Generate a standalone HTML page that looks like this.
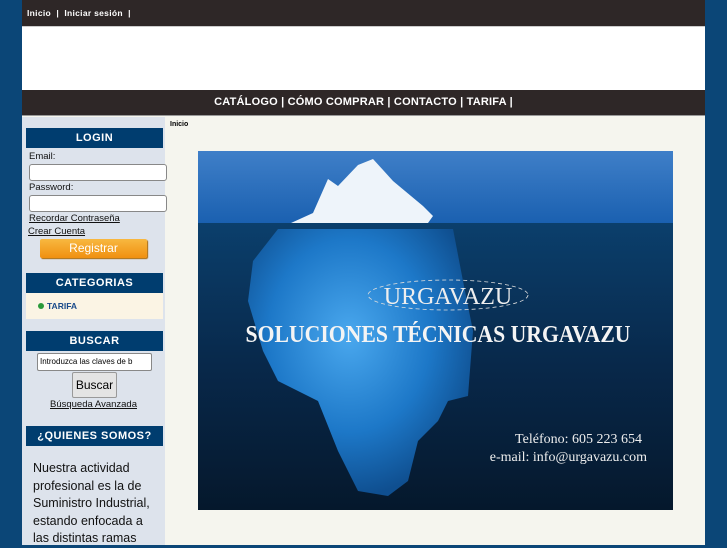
<!DOCTYPE html>
<html><head><meta charset="utf-8"><style>
*{margin:0;padding:0;box-sizing:border-box}
body{width:727px;height:545px;overflow:hidden;background:#0b4677;font-family:"Liberation Sans",sans-serif;position:relative}
#page{position:absolute;left:22px;top:0;width:683px;height:545px;background:#f5f5ee}
#top{position:absolute;left:0;top:0;width:683px;height:27px;background:#2e2727;border-bottom:1px solid #ccc;color:#fff;font-size:8.5px;font-weight:bold;padding:8px 0 0 5px;letter-spacing:.3px}
#white{position:absolute;left:0;top:27px;width:683px;height:63px;background:#fff}
#nav{position:absolute;left:0;top:90px;width:683px;height:26px;background:#2e2727;color:#fff;font-size:11px;font-weight:bold;text-align:center;padding-top:6px;letter-spacing:.2px;border-bottom:1px solid #999}
#side{position:absolute;left:0;top:117px;width:143px;height:428px;background:#dde3ec}
.h{position:absolute;left:4px;width:137px;height:20px;background:#003d6f;color:#fff;font-size:11px;font-weight:bold;text-align:center;padding-top:4px;letter-spacing:.5px}
.lbl{position:absolute;left:7px;font-size:9.5px;color:#111}
.inp{position:absolute;left:7px;width:138px;height:17px;background:#fff;border:1px solid #888;border-radius:3px}
</style></head><body>
<div id="page">
<div id="top">Inicio &nbsp;| &nbsp;Iniciar sesión &nbsp;|</div>
<div id="white"></div>
<div id="nav">CATÁLOGO | CÓMO COMPRAR | CONTACTO | TARIFA |</div>
<div id="side">
 <div class="h" style="top:11px">LOGIN</div>
 <div class="lbl" style="top:34px">Email:</div>
 <div class="inp" style="top:47px"></div>
 <div class="lbl" style="top:65px">Password:</div>
 <div class="inp" style="top:78px"></div>
 <div class="lbl" style="top:96px;text-decoration:underline">Recordar Contraseña</div>
 <div class="lbl" style="top:109px;left:6px;text-decoration:underline">Crear Cuenta</div>
 <div style="position:absolute;left:18px;top:122px;width:107px;height:19px;background:linear-gradient(#f8b840,#f09010);border-radius:2px;color:#fff;font-size:12px;text-align:center;padding-top:2px;box-shadow:1px 1px 1px #a60">Registrar</div>
 <div class="h" style="top:156px">CATEGORIAS</div>
 <div style="position:absolute;left:4px;top:176px;width:137px;height:26px;background:#fbf4e4;font-size:8.5px;font-weight:bold;color:#1a4a8a;padding:8px 0 0 12px"><span style="display:inline-block;width:6px;height:6px;border-radius:50%;background:#2a9a3a;margin-right:3px"></span>TARIFA</div>
 <div class="h" style="top:214px">BUSCAR</div>
 <div style="position:absolute;left:15px;top:236px;width:115px;height:18px;background:#fff;border:1px solid #888;border-radius:2px;font-size:8px;padding:3px 2px;white-space:nowrap;overflow:hidden">Introduzca las claves de b</div>
 <div style="position:absolute;left:50px;top:255px;width:45px;height:26px;background:#e4e4e4;border:1px solid #999;border-radius:2px;font-size:12px;text-align:center;padding-top:5px">Buscar</div>
 <div class="lbl" style="top:282px;left:28px;text-decoration:underline">Búsqueda Avanzada</div>
 <div class="h" style="top:309px">¿QUIENES SOMOS?</div>
 <div style="position:absolute;left:11px;top:343px;font-size:12.5px;line-height:17.5px;color:#111">Nuestra actividad<br>profesional es la de<br>Suministro Industrial,<br>estando enfocada a<br>las distintas ramas</div>
</div>
<div style="position:absolute;left:148px;top:121px;font-size:7px;font-weight:bold">Inicio</div>
<svg style="position:absolute;left:176px;top:151px" width="475" height="359" viewBox="0 0 475 359">
<defs>
<linearGradient id="sky" x1="0" y1="0" x2="0" y2="1"><stop offset="0" stop-color="#3f7fc8"/><stop offset="1" stop-color="#1a60b0"/></linearGradient>
<linearGradient id="sea" x1="0" y1="0" x2="0" y2="1"><stop offset="0" stop-color="#0b3f6c"/><stop offset=".5" stop-color="#08284a"/><stop offset="1" stop-color="#05182c"/></linearGradient>
<radialGradient id="ice" cx=".45" cy=".4" r=".6"><stop offset="0" stop-color="#4aa8ee"/><stop offset=".6" stop-color="#1d78c8"/><stop offset="1" stop-color="#0f4f90"/></radialGradient>
</defs>
<rect width="475" height="73" fill="url(#sky)"/>
<rect y="72" width="475" height="287" fill="url(#sea)"/>
<path d="M93 72 L115 62 L130 28 L140 35 L160 14 L175 8 L195 30 L225 55 L235 65 L230 72Z" fill="#eef4fa"/>
<path d="M80 78 L255 78 L265 130 L275 180 L270 245 L250 250 L240 270 L220 290 L210 330 L190 345 L160 340 L140 300 L120 250 L80 230 L65 200 L50 150 L55 110Z" fill="url(#ice)"/>
<ellipse cx="250" cy="144" rx="80" ry="15" fill="none" stroke="#ddd" stroke-dasharray="4 3" stroke-width=".8"/>
<text x="250" y="153" fill="#eee" font-family="Liberation Serif,serif" font-size="24" text-anchor="middle">URGAVAZU</text>
<text x="240" y="191" fill="#f4f4f4" font-family="Liberation Serif,serif" font-size="24" font-weight="bold" text-anchor="middle" textLength="385" lengthAdjust="spacingAndGlyphs">SOLUCIONES TÉCNICAS URGAVAZU</text>
<text x="444" y="292" fill="#eee" font-family="Liberation Serif,serif" font-size="14" text-anchor="end">Teléfono: 605 223 654</text>
<text x="449" y="310" fill="#eee" font-family="Liberation Serif,serif" font-size="14" text-anchor="end">e-mail: info@urgavazu.com</text>
</svg>
</div>
</body></html>
